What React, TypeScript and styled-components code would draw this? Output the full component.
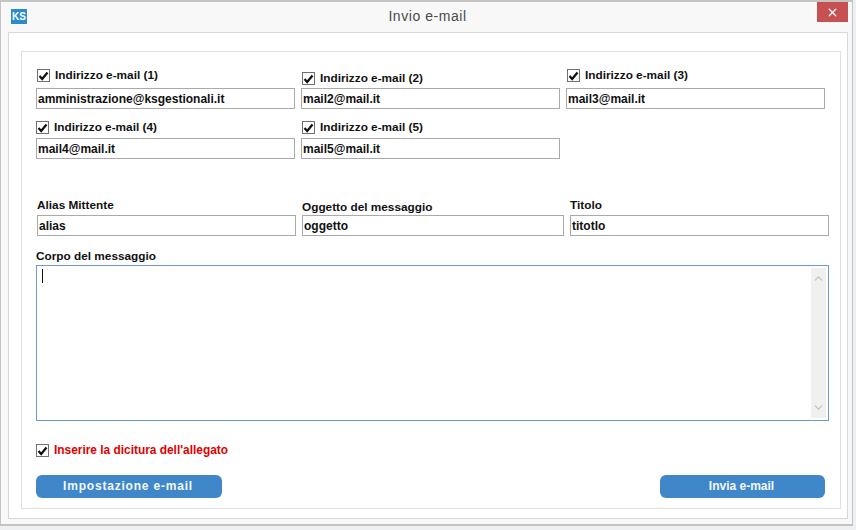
import styled, { createGlobalStyle } from "styled-components";
import { ChevronUp, ChevronDown, X } from "lucide-react";

const GlobalStyle = createGlobalStyle`
  html, body {
    margin: 0;
    padding: 0;
    background: #eef0f2;
    font-family: "Liberation Sans", Arial, sans-serif;
  }
`;

const Window = styled.div`
  box-sizing: border-box;
  width: 853px;
  height: 526px;
  padding: 0 4px 6px 7px;
  background: #f8f8f8;
  border: 1px solid #c4c4c4;
  border-width: 2px 1px 2px 1px;
  overflow: hidden;
`;

const TitleBar = styled.div`
  height: 29px;
  margin: 0 -4px 1px -7px;
  padding: 0 4px 0 10px;
  display: grid;
  grid-template-columns: 1fr auto 1fr;
  align-items: start;
`;

const Logo = styled.div`
  width: 16px;
  height: 15px;
  margin-top: 7px;
  background: #2b8ccb;
  color: #fff;
  font-size: 10px;
  font-weight: bold;
  line-height: 15px;
  text-align: center;
`;

const Title = styled.div`
  margin: 6px 4px 0 0;
  font-size: 14px;
  line-height: 16px;
  letter-spacing: 0.55px;
  color: #4a4a4a;
`;

const CloseButton = styled.div`
  justify-self: end;
  width: 31px;
  height: 20px;
  background: #c75050;
  color: #fff;
  display: flex;
  align-items: center;
  justify-content: center;
`;

const Frame = styled.div`
  box-sizing: border-box;
  height: 487px;
  padding: 18px 6px 9px 12px;
  background: #fff;
  border: 1px solid #d8d8d8;
`;

const Group = styled.div`
  box-sizing: border-box;
  height: 458px;
  padding: 17px 12px 0 14px;
  border: 1px solid #e0e0e0;
`;

const MailGrid = styled.div`
  display: grid;
  grid-template-columns: repeat(3, 259px);
  column-gap: 6px;
  row-gap: 12px;
  align-items: end;
`;

const CheckRow = styled.div<{ $gap?: number; $indent?: number }>`
  display: flex;
  align-items: center;
  gap: 5px;
  margin-bottom: ${(p) => p.$gap ?? 4}px;
  margin-left: ${(p) => p.$indent ?? 0}px;
`;

const CheckBox = styled.span`
  box-sizing: border-box;
  width: 13px;
  height: 13px;
  flex: none;
  display: flex;
  align-items: center;
  justify-content: center;
  background: #fff;
  border: 1px solid #707070;
`;

const CheckLabel = styled.span<{ $danger?: boolean }>`
  font-size: ${(p) => (p.$danger ? 11.9 : 11.8)}px;
  line-height: 13px;
  font-weight: bold;
  color: ${(p) => (p.$danger ? "#e00000" : "#111")};
`;

const TextField = styled.div`
  box-sizing: border-box;
  height: 21px;
  padding: 0 1px;
  background: #fff;
  border: 1px solid #aaaaaa;
  font-size: 12px;
  font-weight: bold;
  line-height: 21px;
  color: #111;
  white-space: nowrap;
`;

const MetaGrid = styled.div`
  display: grid;
  grid-template-columns: 259px 262px 259px;
  column-gap: 6px;
  align-items: end;
  margin: 39px 0 0 1px;
`;

const FieldLabel = styled.div<{ $gap?: number }>`
  margin-bottom: ${(p) => p.$gap ?? 3}px;
  font-size: 11.8px;
  line-height: 14px;
  font-weight: bold;
  color: #111;
`;

const BodySection = styled.div`
  margin-top: 13px;
`;

const MessageBox = styled.div`
  box-sizing: border-box;
  width: 793px;
  height: 156px;
  padding: 2px;
  display: flex;
  justify-content: space-between;
  background: #fff;
  border: 1px solid #6c99cf;
`;

const Caret = styled.span`
  width: 1px;
  height: 14px;
  margin: 1px 0 0 3px;
  background: #111;
`;

const ScrollBar = styled.div`
  width: 15px;
  display: flex;
  flex-direction: column;
  justify-content: space-between;
  align-items: center;
  padding: 4px 0;
  background: #f0f0f0;
  color: #c4c4c4;
`;

const AttachRow = styled(CheckRow)`
  margin: 23px 0 18px;
`;

const Actions = styled.div`
  display: flex;
  justify-content: space-between;
  width: 789px;
`;

const ActionButton = styled.div<{ $width: number; $spacing: number }>`
  box-sizing: border-box;
  width: ${(p) => p.$width}px;
  height: 23px;
  padding-right: 2px;
  background: #3f87c9;
  border-radius: 6px;
  color: #f4f8fc;
  font-size: 12px;
  font-weight: bold;
  line-height: 23px;
  text-align: center;
  letter-spacing: ${(p) => p.$spacing}px;
`;

const Tick = () => (
  <svg width="11" height="10" viewBox="0 0 11 10">
    <path d="M1.5 5 L4.2 8 L9.5 1.5" fill="none" stroke="#111" strokeWidth="2.2" />
  </svg>
);

const mails = [
  { label: "Indirizzo e-mail (1)", value: "amministrazione@ksgestionali.it", gap: 6, indent: 1 },
  { label: "Indirizzo e-mail (2)", value: "mail2@mail.it", gap: 3, indent: 1 },
  { label: "Indirizzo e-mail (3)", value: "mail3@mail.it", gap: 6, indent: 1 },
  { label: "Indirizzo e-mail (4)", value: "mail4@mail.it", gap: 4, indent: 0 },
  { label: "Indirizzo e-mail (5)", value: "mail5@mail.it", gap: 4, indent: 1 },
];

const meta = [
  { label: "Alias Mittente", value: "alias", gap: 3 },
  { label: "Oggetto del messaggio", value: "oggetto", gap: 1 },
  { label: "Titolo", value: "titotlo", gap: 3 },
];

export default function App() {
  return (
    <>
      <GlobalStyle />
      <Window>
        <TitleBar>
          <Logo>KS</Logo>
          <Title>Invio e-mail</Title>
          <CloseButton>
            <X size={13} strokeWidth={2.5} />
          </CloseButton>
        </TitleBar>
        <Frame>
          <Group>
            <MailGrid>
              {mails.map((m) => (
                <div key={m.label}>
                  <CheckRow $gap={m.gap} $indent={m.indent}>
                    <CheckBox>
                      <Tick />
                    </CheckBox>
                    <CheckLabel>{m.label}</CheckLabel>
                  </CheckRow>
                  <TextField>{m.value}</TextField>
                </div>
              ))}
            </MailGrid>
            <MetaGrid>
              {meta.map((m) => (
                <div key={m.label}>
                  <FieldLabel $gap={m.gap}>{m.label}</FieldLabel>
                  <TextField>{m.value}</TextField>
                </div>
              ))}
            </MetaGrid>
            <BodySection>
              <FieldLabel $gap={2}>Corpo del messaggio</FieldLabel>
              <MessageBox>
                <Caret />
                <ScrollBar>
                  <ChevronUp size={13} strokeWidth={2.5} />
                  <ChevronDown size={13} strokeWidth={2.5} />
                </ScrollBar>
              </MessageBox>
            </BodySection>
            <AttachRow>
              <CheckBox>
                <Tick />
              </CheckBox>
              <CheckLabel $danger>Inserire la dicitura dell'allegato</CheckLabel>
            </AttachRow>
            <Actions>
              <ActionButton $width={186} $spacing={0.8}>
                Impostazione e-mail
              </ActionButton>
              <ActionButton $width={165} $spacing={0}>
                Invia e-mail
              </ActionButton>
            </Actions>
          </Group>
        </Frame>
      </Window>
    </>
  );
}
